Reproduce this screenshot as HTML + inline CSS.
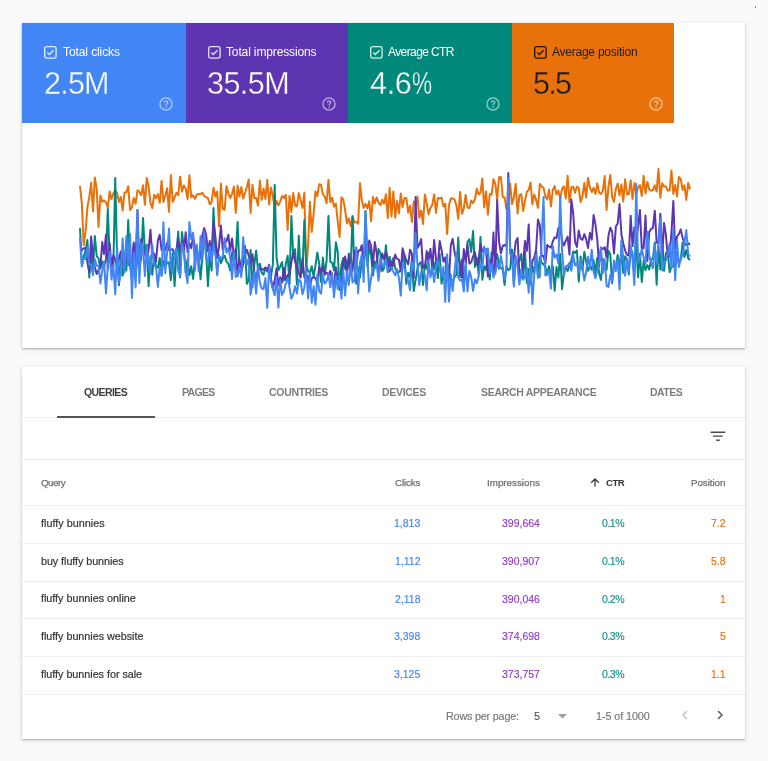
<!DOCTYPE html>
<html><head><meta charset="utf-8">
<style>
html,body{margin:0;padding:0;}
body{width:768px;height:761px;overflow:hidden;background:#fafafa;position:relative;font-family:"Liberation Sans", sans-serif;}
.card{position:absolute;background:#fff;border-radius:0;box-shadow:0 1px 1.5px rgba(0,0,0,.26),0 1px 5px rgba(0,0,0,.12);}
.t{position:absolute;white-space:nowrap;line-height:1;will-change:transform;}
</style></head><body>
<div style="position:absolute;left:755px;top:6px;width:1px;height:2px;background:#8a8a8a"></div>
<div class="card" style="left:22px;top:23px;width:723px;height:325px;"></div>
<div class="card" style="left:22px;top:367px;width:723px;height:372px;"></div>
<div style="position:absolute;left:22.00px;top:23px;width:164.00px;height:99.6px;background:#4285f4"></div>
<svg style="position:absolute;left:44.00px;top:46.2px" width="13" height="13" viewBox="0 0 13 13"><rect x="0.7" y="0.7" width="11.4" height="11.4" rx="2" fill="none" stroke="rgba(255,255,255,.85)" stroke-width="1.3"/><path d="M3.3 6.5 L5.3 8.5 L9.6 4.2" fill="none" stroke="rgba(255,255,255,.85)" stroke-width="1.25"/></svg>
<div class="t" style="left:62.9px;top:45.60px;font-size:12px;color:#fff;font-weight:400;letter-spacing:-0.091px;">Total clicks</div>
<div class="t" style="left:44.3px;top:67.98px;font-size:30.5px;color:#fff;font-weight:400;letter-spacing:-0.767px;-webkit-text-stroke:0.35px #4285f4;">2.5M</div>
<svg style="position:absolute;left:159.40px;top:96.60px" width="14" height="14" viewBox="0 0 14 14"><circle cx="7" cy="7" r="6.1" fill="none" stroke="rgba(255,255,255,.6)" stroke-width="1.25"/><path d="M5.2 5.4 C5.2 3.6 8.8 3.6 8.8 5.3 C8.8 6.6 7.1 6.7 7.1 8.3" fill="none" stroke="rgba(255,255,255,.6)" stroke-width="1.2"/><circle cx="7.1" cy="10" r="0.8" fill="rgba(255,255,255,.6)"/></svg>
<div style="position:absolute;left:185.60px;top:23px;width:163.00px;height:99.6px;background:#5e35b1"></div>
<svg style="position:absolute;left:207.60px;top:46.2px" width="13" height="13" viewBox="0 0 13 13"><rect x="0.7" y="0.7" width="11.4" height="11.4" rx="2" fill="none" stroke="rgba(255,255,255,.85)" stroke-width="1.3"/><path d="M3.3 6.5 L5.3 8.5 L9.6 4.2" fill="none" stroke="rgba(255,255,255,.85)" stroke-width="1.25"/></svg>
<div class="t" style="left:226.0px;top:45.60px;font-size:12px;color:#fff;font-weight:400;letter-spacing:-0.138px;">Total impressions</div>
<div class="t" style="left:206.8px;top:67.98px;font-size:30.5px;color:#fff;font-weight:400;letter-spacing:-0.55px;-webkit-text-stroke:0.35px #5e35b1;">35.5M</div>
<svg style="position:absolute;left:322.45px;top:96.60px" width="14" height="14" viewBox="0 0 14 14"><circle cx="7" cy="7" r="6.1" fill="none" stroke="rgba(255,255,255,.6)" stroke-width="1.25"/><path d="M5.2 5.4 C5.2 3.6 8.8 3.6 8.8 5.3 C8.8 6.6 7.1 6.7 7.1 8.3" fill="none" stroke="rgba(255,255,255,.6)" stroke-width="1.2"/><circle cx="7.1" cy="10" r="0.8" fill="rgba(255,255,255,.6)"/></svg>
<div style="position:absolute;left:348.20px;top:23px;width:163.95px;height:99.6px;background:#00897b"></div>
<svg style="position:absolute;left:370.20px;top:46.2px" width="13" height="13" viewBox="0 0 13 13"><rect x="0.7" y="0.7" width="11.4" height="11.4" rx="2" fill="none" stroke="rgba(255,255,255,.85)" stroke-width="1.3"/><path d="M3.3 6.5 L5.3 8.5 L9.6 4.2" fill="none" stroke="rgba(255,255,255,.85)" stroke-width="1.25"/></svg>
<div class="t" style="left:388.1px;top:45.60px;font-size:12px;color:#fff;font-weight:400;letter-spacing:-0.6px;">Average CTR</div>
<div class="t" style="left:369.6px;top:67.98px;font-size:30.5px;color:#fff;font-weight:400;letter-spacing:-0.3px;-webkit-text-stroke:0.35px #00897b;">4.6<span style="display:inline-block;transform:scaleX(0.74);transform-origin:0 0">%</span></div>
<svg style="position:absolute;left:485.50px;top:96.60px" width="14" height="14" viewBox="0 0 14 14"><circle cx="7" cy="7" r="6.1" fill="none" stroke="rgba(255,255,255,.6)" stroke-width="1.25"/><path d="M5.2 5.4 C5.2 3.6 8.8 3.6 8.8 5.3 C8.8 6.6 7.1 6.7 7.1 8.3" fill="none" stroke="rgba(255,255,255,.6)" stroke-width="1.2"/><circle cx="7.1" cy="10" r="0.8" fill="rgba(255,255,255,.6)"/></svg>
<div style="position:absolute;left:511.75px;top:23px;width:162.70px;height:99.6px;background:#e8710a"></div>
<svg style="position:absolute;left:533.75px;top:46.2px" width="13" height="13" viewBox="0 0 13 13"><rect x="0.7" y="0.7" width="11.4" height="11.4" rx="2" fill="none" stroke="rgba(0,0,0,.85)" stroke-width="1.3"/><path d="M3.3 6.5 L5.3 8.5 L9.6 4.2" fill="none" stroke="rgba(0,0,0,.85)" stroke-width="1.25"/></svg>
<div class="t" style="left:551.5px;top:45.60px;font-size:12px;color:#1d1d1d;font-weight:400;letter-spacing:-0.24px;">Average position</div>
<div class="t" style="left:532.5px;top:67.98px;font-size:30.5px;color:#1d1d1d;font-weight:400;letter-spacing:-1.75px;-webkit-text-stroke:0.35px #e8710a;">5.5</div>
<svg style="position:absolute;left:648.55px;top:96.60px" width="14" height="14" viewBox="0 0 14 14"><circle cx="7" cy="7" r="6.1" fill="none" stroke="rgba(255,255,255,.6)" stroke-width="1.25"/><path d="M5.2 5.4 C5.2 3.6 8.8 3.6 8.8 5.3 C8.8 6.6 7.1 6.7 7.1 8.3" fill="none" stroke="rgba(255,255,255,.6)" stroke-width="1.2"/><circle cx="7.1" cy="10" r="0.8" fill="rgba(255,255,255,.6)"/></svg>
<svg style="position:absolute;left:0;top:0" width="768" height="761" viewBox="0 0 768 761"><polyline points="80.00,186.0 81.85,203.6 83.71,245.0 85.56,231.4 87.42,207.1 89.27,197.1 91.12,182.7 92.98,211.4 94.83,177.5 96.69,188.8 98.54,227.0 100.40,195.4 102.25,201.8 104.10,200.4 105.96,202.4 107.81,207.7 109.67,191.4 111.52,199.3 113.37,193.3 115.23,190.7 117.08,193.0 118.94,202.0 120.79,197.0 122.64,210.6 124.50,192.6 126.35,192.2 128.21,186.3 130.06,209.9 131.91,207.3 133.77,198.1 135.62,203.7 137.48,190.3 139.33,191.6 141.19,195.2 143.04,185.3 144.89,204.7 146.75,177.9 148.60,186.3 150.46,203.1 152.31,208.2 154.16,194.8 156.02,198.2 157.87,194.1 159.73,202.8 161.58,180.9 163.43,201.9 165.29,195.7 167.14,188.3 169.00,211.8 170.85,175.1 172.71,201.8 174.56,197.4 176.41,192.8 178.27,195.2 180.12,176.7 181.98,191.6 183.83,185.5 185.68,188.5 187.54,199.2 189.39,175.3 191.25,197.4 193.10,195.2 194.95,198.9 196.81,194.7 198.66,193.9 200.52,194.1 202.37,192.7 204.22,195.9 206.08,197.2 207.93,198.1 209.79,204.3 211.64,201.8 213.50,187.7 215.35,196.6 217.20,191.6 219.06,226.2 220.91,183.5 222.77,209.1 224.62,209.7 226.47,186.2 228.33,193.3 230.18,198.0 232.04,194.0 233.89,186.6 235.74,212.9 237.60,185.8 239.45,196.5 241.31,187.1 243.16,198.4 245.02,192.8 246.87,187.0 248.72,179.6 250.58,212.9 252.43,184.8 254.29,198.0 256.14,198.1 257.99,205.6 259.85,180.5 261.70,199.8 263.56,188.6 265.41,199.0 267.26,179.8 269.12,204.5 270.97,187.6 272.83,195.9 274.68,207.8 276.53,200.9 278.39,205.3 280.24,201.3 282.10,196.0 283.95,198.0 285.81,194.8 287.66,230.0 289.51,195.9 291.37,211.9 293.22,193.1 295.08,205.5 296.93,206.4 298.78,192.9 300.64,199.9 302.49,208.0 304.35,192.4 306.20,271.0 308.05,246.5 309.91,201.8 311.76,232.0 313.62,213.8 315.47,191.3 317.33,196.2 319.18,184.2 321.03,184.7 322.89,194.4 324.74,196.6 326.60,203.3 328.45,179.8 330.30,202.0 332.16,197.7 334.01,206.8 335.87,203.5 337.72,221.4 339.57,237.0 341.43,197.2 343.28,199.3 345.14,210.1 346.99,223.4 348.84,218.4 350.70,226.2 352.55,216.5 354.41,222.4 356.26,222.1 358.12,223.8 359.97,183.2 361.82,200.2 363.68,207.9 365.53,203.9 367.39,208.5 369.24,201.3 371.09,221.2 372.95,197.1 374.80,203.5 376.66,197.4 378.51,202.6 380.36,205.2 382.22,199.6 384.07,203.6 385.93,194.2 387.78,218.0 389.64,187.8 391.49,216.5 393.34,191.5 395.20,217.7 397.05,201.1 398.91,213.4 400.76,193.6 402.61,207.0 404.47,197.9 406.32,197.9 408.18,212.7 410.03,205.6 411.88,222.0 413.74,201.5 415.59,204.8 417.45,196.6 419.30,217.7 421.16,210.4 423.01,223.9 424.86,194.5 426.72,203.4 428.57,214.3 430.43,208.0 432.28,204.8 434.13,194.4 435.99,213.0 437.84,198.0 439.70,198.5 441.55,197.6 443.40,206.6 445.26,203.6 447.11,234.0 448.97,205.2 450.82,198.6 452.67,198.2 454.53,199.6 456.38,205.2 458.24,218.9 460.09,191.9 461.95,213.8 463.80,208.6 465.65,195.0 467.51,207.3 469.36,208.1 471.22,200.6 473.07,203.2 474.92,199.2 476.78,188.8 478.63,194.5 480.49,192.8 482.34,178.4 484.19,207.4 486.05,191.4 487.90,214.6 489.76,194.1 491.61,194.7 493.47,179.2 495.32,183.8 497.17,199.4 499.03,177.3 500.88,177.0 502.74,197.2 504.59,197.4 506.44,209.1 508.30,201.8 510.15,183.5 512.01,204.1 513.86,197.4 515.71,183.7 517.57,213.6 519.42,195.3 521.28,194.0 523.13,211.0 524.98,200.7 526.84,191.8 528.69,190.1 530.55,182.5 532.40,204.4 534.26,194.5 536.11,199.9 537.96,207.9 539.82,183.9 541.67,186.4 543.53,187.7 545.38,196.6 547.23,199.4 549.09,189.6 550.94,206.4 552.80,190.0 554.65,186.1 556.50,194.6 558.36,190.5 560.21,198.3 562.07,188.7 563.92,186.4 565.78,198.5 567.63,175.7 569.48,202.3 571.34,187.3 573.19,186.7 575.05,192.8 576.90,186.6 578.75,188.1 580.61,202.0 582.46,196.3 584.32,183.1 586.17,197.6 588.02,177.9 589.88,187.3 591.73,192.0 593.59,187.8 595.44,193.9 597.29,183.4 599.15,192.6 601.00,194.0 602.86,190.4 604.71,176.1 606.57,210.0 608.42,186.9 610.27,174.9 612.13,196.9 613.98,201.8 615.84,189.0 617.69,183.7 619.54,195.4 621.40,184.6 623.25,201.5 625.11,179.3 626.96,194.2 628.81,194.0 630.67,180.3 632.52,199.0 634.38,183.0 636.23,194.2 638.09,187.6 639.94,185.1 641.79,196.0 643.65,175.8 645.50,193.5 647.36,181.8 649.21,189.5 651.06,190.7 652.92,190.3 654.77,185.4 656.63,191.6 658.48,168.8 660.33,197.8 662.19,183.2 664.04,186.6 665.90,186.4 667.75,190.7 669.60,190.3 671.46,170.5 673.31,193.9 675.17,185.1 677.02,196.5 678.88,177.0 680.73,178.9 682.58,189.9 684.44,185.3 686.29,200.0 688.15,183.0 690.00,189.6" fill="none" stroke="#e8710a" stroke-width="2" stroke-linejoin="round"/><polyline points="80.00,228.0 81.85,264.5 83.71,256.9 85.56,250.4 87.42,240.0 89.27,277.4 91.12,250.5 92.98,268.5 94.83,236.1 96.69,256.1 98.54,258.5 100.40,268.4 102.25,261.5 104.10,266.2 105.96,259.1 107.81,209.0 109.67,257.7 111.52,264.6 113.37,265.6 115.23,178.0 117.08,258.6 118.94,285.1 120.79,257.0 122.64,275.6 124.50,264.8 126.35,270.6 128.21,220.0 130.06,265.8 131.91,279.2 133.77,244.6 135.62,277.8 137.48,254.0 139.33,266.1 141.19,259.3 143.04,218.0 144.89,252.2 146.75,244.8 148.60,286.1 150.46,256.1 152.31,274.7 154.16,255.9 156.02,266.8 157.87,267.6 159.73,258.1 161.58,275.1 163.43,260.8 165.29,266.4 167.14,262.5 169.00,262.4 170.85,280.3 172.71,253.3 174.56,286.1 176.41,252.7 178.27,231.5 180.12,277.5 181.98,232.1 183.83,246.7 185.68,272.7 187.54,259.5 189.39,275.1 191.25,266.3 193.10,278.8 194.95,259.5 196.81,250.3 198.66,255.8 200.52,279.2 202.37,257.5 204.22,233.9 206.08,251.8 207.93,286.1 209.79,254.0 211.64,270.4 213.50,208.0 215.35,254.0 217.20,254.9 219.06,255.2 220.91,263.0 222.77,258.5 224.62,255.5 226.47,261.6 228.33,263.6 230.18,270.5 232.04,252.3 233.89,262.4 235.74,255.7 237.60,222.0 239.45,269.3 241.31,264.7 243.16,258.7 245.02,245.7 246.87,283.8 248.72,280.0 250.58,249.9 252.43,287.3 254.29,265.0 256.14,250.5 257.99,269.8 259.85,263.7 261.70,272.7 263.56,274.7 265.41,267.9 267.26,271.5 269.12,272.4 270.97,276.5 272.83,264.4 274.68,185.0 276.53,256.9 278.39,270.3 280.24,266.5 282.10,262.0 283.95,280.3 285.81,263.8 287.66,255.7 289.51,284.1 291.37,216.0 293.22,255.5 295.08,249.3 296.93,284.8 298.78,235.7 300.64,274.7 302.49,271.2 304.35,220.0 306.20,265.2 308.05,270.9 309.91,273.0 311.76,266.2 313.62,276.7 315.47,265.6 317.33,252.5 319.18,263.6 321.03,282.2 322.89,257.5 324.74,274.9 326.60,260.9 328.45,216.0 330.30,262.0 332.16,262.6 334.01,270.5 335.87,242.2 337.72,251.7 339.57,290.1 341.43,265.1 343.28,258.0 345.14,268.9 346.99,260.5 348.84,267.1 350.70,267.7 352.55,216.0 354.41,269.6 356.26,283.8 358.12,267.2 359.97,277.8 361.82,260.5 363.68,271.8 365.53,211.0 367.39,266.5 369.24,246.5 371.09,254.9 372.95,275.5 374.80,261.6 376.66,265.8 378.51,248.9 380.36,252.9 382.22,271.2 384.07,268.5 385.93,245.2 387.78,272.1 389.64,256.7 391.49,269.4 393.34,257.8 395.20,268.3 397.05,271.2 398.91,272.2 400.76,270.0 402.61,261.5 404.47,255.0 406.32,283.9 408.18,272.8 410.03,277.4 411.88,258.9 413.74,291.0 415.59,280.1 417.45,268.6 419.30,263.5 421.16,262.1 423.01,285.0 424.86,264.6 426.72,268.9 428.57,253.1 430.43,257.2 432.28,257.0 434.13,269.0 435.99,260.1 437.84,278.1 439.70,254.1 441.55,283.8 443.40,272.1 445.26,274.7 447.11,263.0 448.97,269.1 450.82,284.9 452.67,281.3 454.53,277.1 456.38,275.1 458.24,237.6 460.09,277.0 461.95,259.6 463.80,284.5 465.65,264.2 467.51,242.0 469.36,239.3 471.22,252.0 473.07,231.0 474.92,267.1 476.78,257.4 478.63,274.0 480.49,237.0 482.34,279.7 484.19,266.3 486.05,270.1 487.90,253.4 489.76,279.5 491.61,252.6 493.47,273.7 495.32,262.0 497.17,254.1 499.03,265.2 500.88,268.0 502.74,269.3 504.59,285.0 506.44,266.1 508.30,270.1 510.15,269.0 512.01,249.7 513.86,283.8 515.71,258.9 517.57,263.1 519.42,260.8 521.28,253.9 523.13,279.4 524.98,251.4 526.84,282.9 528.69,268.9 530.55,284.4 532.40,266.5 534.26,273.1 536.11,250.1 537.96,276.2 539.82,257.2 541.67,262.6 543.53,264.3 545.38,266.7 547.23,274.1 549.09,266.2 550.94,276.0 552.80,266.2 554.65,290.8 556.50,267.0 558.36,277.5 560.21,254.0 562.07,289.2 563.92,272.5 565.78,266.3 567.63,271.1 569.48,266.2 571.34,260.2 573.19,251.6 575.05,252.9 576.90,250.2 578.75,281.6 580.61,256.5 582.46,270.4 584.32,251.7 586.17,261.4 588.02,270.8 589.88,266.2 591.73,269.7 593.59,260.1 595.44,273.5 597.29,257.7 599.15,273.5 601.00,279.9 602.86,259.1 604.71,265.7 606.57,269.8 608.42,250.7 610.27,254.2 612.13,283.2 613.98,266.5 615.84,266.3 617.69,255.0 619.54,268.8 621.40,251.5 623.25,272.8 625.11,256.3 626.96,260.1 628.81,274.5 630.67,248.2 632.52,253.5 634.38,274.6 636.23,240.9 638.09,277.3 639.94,253.7 641.79,282.0 643.65,260.9 645.50,270.2 647.36,265.1 649.21,269.5 651.06,259.3 652.92,258.5 654.77,242.6 656.63,284.8 658.48,246.0 660.33,269.4 662.19,240.0 664.04,270.8 665.90,253.0 667.75,251.8 669.60,272.1 671.46,266.8 673.31,266.6 675.17,251.3 677.02,255.8 678.88,264.0 680.73,259.8 682.58,242.8 684.44,257.1 686.29,250.1 688.15,258.0 690.00,260.1" fill="none" stroke="#00897b" stroke-width="2" stroke-linejoin="round"/><polyline points="80.00,251.3 81.85,250.4 83.71,248.2 85.56,248.3 87.42,262.5 89.27,272.0 91.12,236.5 92.98,256.7 94.83,266.9 96.69,274.0 98.54,270.0 100.40,266.5 102.25,242.1 104.10,254.0 105.96,234.5 107.81,268.6 109.67,243.3 111.52,266.8 113.37,255.3 115.23,259.3 117.08,268.1 118.94,258.6 120.79,251.5 122.64,262.8 124.50,269.5 126.35,252.7 128.21,250.1 130.06,260.4 131.91,262.3 133.77,242.4 135.62,259.1 137.48,210.0 139.33,266.8 141.19,238.9 143.04,249.0 144.89,253.7 146.75,260.9 148.60,249.5 150.46,229.8 152.31,256.9 154.16,253.6 156.02,261.6 157.87,240.3 159.73,234.9 161.58,250.1 163.43,245.9 165.29,250.2 167.14,242.8 169.00,250.3 170.85,249.4 172.71,249.2 174.56,254.7 176.41,251.6 178.27,238.6 180.12,250.1 181.98,242.4 183.83,252.1 185.68,232.2 187.54,251.9 189.39,242.9 191.25,248.1 193.10,236.5 194.95,247.4 196.81,258.0 198.66,262.9 200.52,255.7 202.37,235.3 204.22,228.1 206.08,234.5 207.93,251.2 209.79,241.1 211.64,257.7 213.50,221.8 215.35,235.9 217.20,258.1 219.06,246.2 220.91,225.6 222.77,249.9 224.62,242.2 226.47,241.5 228.33,234.7 230.18,250.8 232.04,238.6 233.89,256.0 235.74,249.5 237.60,275.6 239.45,259.5 241.31,271.9 243.16,264.1 245.02,253.5 246.87,249.9 248.72,255.8 250.58,263.2 252.43,254.3 254.29,272.0 256.14,277.6 257.99,269.1 259.85,269.7 261.70,268.8 263.56,269.8 265.41,267.5 267.26,269.9 269.12,264.7 270.97,278.6 272.83,288.6 274.68,280.6 276.53,268.3 278.39,285.3 280.24,277.2 282.10,282.5 283.95,268.1 285.81,279.9 287.66,275.0 289.51,275.5 291.37,262.4 293.22,252.6 295.08,261.8 296.93,265.9 298.78,272.5 300.64,277.6 302.49,258.5 304.35,277.3 306.20,279.2 308.05,275.8 309.91,287.1 311.76,278.4 313.62,277.1 315.47,278.2 317.33,283.0 319.18,267.1 321.03,272.3 322.89,266.8 324.74,273.9 326.60,272.7 328.45,275.0 330.30,270.9 332.16,280.7 334.01,287.0 335.87,267.2 337.72,279.4 339.57,281.5 341.43,282.3 343.28,261.9 345.14,256.5 346.99,275.5 348.84,253.6 350.70,275.5 352.55,268.1 354.41,250.7 356.26,267.5 358.12,250.6 359.97,250.8 361.82,245.1 363.68,266.0 365.53,246.6 367.39,249.5 369.24,240.5 371.09,245.8 372.95,265.0 374.80,242.1 376.66,252.8 378.51,276.0 380.36,267.1 382.22,253.6 384.07,259.1 385.93,251.4 387.78,258.4 389.64,271.3 391.49,261.2 393.34,265.6 395.20,254.6 397.05,258.8 398.91,259.6 400.76,271.3 402.61,248.3 404.47,255.7 406.32,260.2 408.18,264.4 410.03,249.7 411.88,253.6 413.74,277.9 415.59,197.0 417.45,247.9 419.30,244.6 421.16,239.1 423.01,267.8 424.86,267.3 426.72,251.1 428.57,260.0 430.43,248.7 432.28,268.6 434.13,240.0 435.99,259.0 437.84,265.0 439.70,240.9 441.55,250.2 443.40,261.4 445.26,257.5 447.11,277.5 448.97,278.4 450.82,245.5 452.67,238.8 454.53,251.8 456.38,260.6 458.24,260.2 460.09,262.4 461.95,277.6 463.80,249.1 465.65,262.2 467.51,244.8 469.36,263.6 471.22,262.2 473.07,256.4 474.92,252.1 476.78,264.8 478.63,261.3 480.49,244.0 482.34,251.2 484.19,250.1 486.05,249.0 487.90,276.6 489.76,260.1 491.61,269.9 493.47,232.6 495.32,273.4 497.17,200.0 499.03,241.4 500.88,253.3 502.74,246.0 504.59,245.0 506.44,246.4 508.30,173.0 510.15,247.6 512.01,263.5 513.86,258.1 515.71,241.4 517.57,238.0 519.42,274.7 521.28,277.8 523.13,262.9 524.98,241.1 526.84,251.0 528.69,224.5 530.55,273.6 532.40,261.4 534.26,257.5 536.11,249.4 537.96,219.6 539.82,225.1 541.67,255.7 543.53,256.1 545.38,263.5 547.23,245.1 549.09,246.5 550.94,247.7 552.80,241.5 554.65,237.4 556.50,238.1 558.36,228.2 560.21,226.2 562.07,240.9 563.92,245.5 565.78,240.6 567.63,236.6 569.48,254.6 571.34,199.5 573.19,213.5 575.05,241.9 576.90,247.0 578.75,230.6 580.61,238.7 582.46,239.8 584.32,234.1 586.17,239.4 588.02,248.1 589.88,232.8 591.73,239.8 593.59,215.0 595.44,224.6 597.29,239.4 599.15,266.2 601.00,247.4 602.86,249.0 604.71,247.2 606.57,257.5 608.42,235.9 610.27,227.7 612.13,231.8 613.98,253.5 615.84,226.6 617.69,223.6 619.54,204.0 621.40,234.3 623.25,243.5 625.11,250.6 626.96,254.6 628.81,255.6 630.67,215.7 632.52,246.1 634.38,227.3 636.23,240.5 638.09,226.9 639.94,210.0 641.79,248.7 643.65,248.3 645.50,215.6 647.36,260.9 649.21,232.1 651.06,229.0 652.92,228.0 654.77,210.7 656.63,242.6 658.48,243.5 660.33,213.7 662.19,255.3 664.04,222.9 665.90,235.2 667.75,256.9 669.60,255.9 671.46,232.7 673.31,201.0 675.17,248.8 677.02,236.5 678.88,234.1 680.73,229.4 682.58,237.7 684.44,243.2 686.29,245.1 688.15,243.0 690.00,244.7" fill="none" stroke="#5e35b1" stroke-width="2" stroke-linejoin="round"/><polyline points="80.00,237.5 81.85,266.4 83.71,258.6 85.56,259.0 87.42,247.2 89.27,264.9 91.12,265.3 92.98,275.2 94.83,259.2 96.69,265.5 98.54,265.8 100.40,283.4 102.25,270.6 104.10,261.6 105.96,293.4 107.81,266.9 109.67,251.5 111.52,279.6 113.37,265.2 115.23,294.3 117.08,246.8 118.94,282.6 120.79,274.4 122.64,238.4 124.50,272.4 126.35,236.2 128.21,265.6 130.06,233.9 131.91,297.9 133.77,252.3 135.62,287.4 137.48,210.0 139.33,282.9 141.19,242.9 143.04,248.4 144.89,275.9 146.75,246.0 148.60,265.3 150.46,273.6 152.31,244.6 154.16,265.0 156.02,267.4 157.87,286.9 159.73,267.1 161.58,276.0 163.43,222.3 165.29,273.3 167.14,251.4 169.00,228.5 170.85,268.9 172.71,273.4 174.56,252.4 176.41,248.4 178.27,270.9 180.12,276.1 181.98,244.0 183.83,251.6 185.68,271.7 187.54,283.2 189.39,222.3 191.25,239.1 193.10,232.8 194.95,270.8 196.81,244.6 198.66,271.5 200.52,236.3 202.37,254.7 204.22,231.7 206.08,259.0 207.93,262.1 209.79,246.3 211.64,261.8 213.50,244.8 215.35,253.6 217.20,275.3 219.06,256.2 220.91,258.1 222.77,256.7 224.62,238.2 226.47,252.7 228.33,248.0 230.18,257.4 232.04,279.0 233.89,252.0 235.74,276.9 237.60,276.4 239.45,266.6 241.31,277.0 243.16,237.3 245.02,262.2 246.87,264.4 248.72,258.2 250.58,294.7 252.43,283.2 254.29,271.5 256.14,293.6 257.99,266.0 259.85,282.5 261.70,288.5 263.56,289.1 265.41,278.1 267.26,307.8 269.12,265.8 270.97,281.7 272.83,288.9 274.68,295.2 276.53,276.7 278.39,307.6 280.24,279.4 282.10,294.9 283.95,291.3 285.81,283.5 287.66,278.5 289.51,287.3 291.37,298.6 293.22,294.4 295.08,286.3 296.93,293.5 298.78,279.4 300.64,281.3 302.49,294.2 304.35,287.5 306.20,269.0 308.05,298.4 309.91,272.8 311.76,302.7 313.62,286.2 315.47,304.7 317.33,274.6 319.18,291.1 321.03,293.7 322.89,275.1 324.74,283.6 326.60,281.3 328.45,274.3 330.30,287.2 332.16,273.1 334.01,297.1 335.87,276.3 337.72,289.0 339.57,275.8 341.43,298.6 343.28,270.8 345.14,295.6 346.99,271.1 348.84,284.9 350.70,264.6 352.55,282.4 354.41,280.9 356.26,247.2 358.12,293.3 359.97,262.5 361.82,254.7 363.68,282.0 365.53,211.0 367.39,258.1 369.24,291.6 371.09,277.6 372.95,268.0 374.80,268.9 376.66,263.8 378.51,280.7 380.36,258.6 382.22,265.4 384.07,267.0 385.93,259.2 387.78,270.8 389.64,267.5 391.49,267.4 393.34,271.7 395.20,275.4 397.05,269.3 398.91,278.1 400.76,295.6 402.61,263.1 404.47,267.7 406.32,276.5 408.18,279.7 410.03,290.3 411.88,261.7 413.74,270.4 415.59,233.0 417.45,264.7 419.30,285.0 421.16,271.8 423.01,272.5 424.86,274.8 426.72,290.3 428.57,260.7 430.43,277.5 432.28,267.2 434.13,282.0 435.99,267.7 437.84,260.1 439.70,267.1 441.55,276.5 443.40,266.7 445.26,302.0 447.11,254.3 448.97,301.6 450.82,274.5 452.67,291.0 454.53,271.7 456.38,253.3 458.24,277.3 460.09,280.6 461.95,279.2 463.80,291.4 465.65,263.1 467.51,291.4 469.36,270.9 471.22,277.2 473.07,290.9 474.92,279.2 476.78,283.3 478.63,276.3 480.49,264.3 482.34,268.8 484.19,246.4 486.05,253.5 487.90,248.4 489.76,273.3 491.61,263.7 493.47,277.5 495.32,271.7 497.17,263.0 499.03,269.0 500.88,255.8 502.74,266.7 504.59,279.6 506.44,268.5 508.30,178.0 510.15,254.0 512.01,255.1 513.86,286.6 515.71,256.0 517.57,266.6 519.42,284.6 521.28,269.2 523.13,279.4 524.98,277.3 526.84,267.8 528.69,292.8 530.55,259.3 532.40,304.0 534.26,274.8 536.11,254.6 537.96,277.8 539.82,277.1 541.67,239.1 543.53,197.0 545.38,275.5 547.23,274.8 549.09,270.9 550.94,288.4 552.80,246.0 554.65,257.6 556.50,254.6 558.36,263.5 560.21,196.0 562.07,250.6 563.92,275.6 565.78,266.9 567.63,265.6 569.48,262.8 571.34,270.8 573.19,254.3 575.05,265.4 576.90,263.0 578.75,272.8 580.61,259.3 582.46,268.2 584.32,280.4 586.17,271.8 588.02,256.9 589.88,267.8 591.73,249.7 593.59,272.0 595.44,278.2 597.29,269.7 599.15,261.5 601.00,247.7 602.86,273.0 604.71,259.2 606.57,285.8 608.42,286.9 610.27,275.1 612.13,281.6 613.98,260.5 615.84,271.1 617.69,259.4 619.54,289.4 621.40,240.0 623.25,258.2 625.11,275.7 626.96,258.3 628.81,271.8 630.67,245.6 632.52,259.5 634.38,285.0 636.23,184.0 638.09,262.3 639.94,257.9 641.79,249.2 643.65,257.9 645.50,263.6 647.36,231.8 649.21,255.4 651.06,262.2 652.92,268.5 654.77,245.5 656.63,263.8 658.48,243.5 660.33,218.4 662.19,270.4 664.04,262.3 665.90,260.6 667.75,254.8 669.60,243.2 671.46,268.1 673.31,229.1 675.17,280.1 677.02,241.2 678.88,267.1 680.73,257.6 682.58,255.3 684.44,242.4 686.29,230.1 688.15,254.0 690.00,256.5" fill="none" stroke="#4285f4" stroke-width="2" stroke-linejoin="round"/></svg>

<div class="t" style="left:83.6px;top:386.88px;font-size:10.5px;color:#3c4043;font-weight:700;letter-spacing:-0.6px;">QUERIES</div>
<div class="t" style="left:181.5px;top:386.88px;font-size:10.5px;color:#7d7d7d;font-weight:700;letter-spacing:-0.675px;">PAGES</div>
<div class="t" style="left:268.9px;top:386.88px;font-size:10.5px;color:#7d7d7d;font-weight:700;letter-spacing:-0.312px;">COUNTRIES</div>
<div class="t" style="left:382.3px;top:386.88px;font-size:10.5px;color:#7d7d7d;font-weight:700;letter-spacing:-0.317px;">DEVICES</div>
<div class="t" style="left:480.5px;top:386.88px;font-size:10.5px;color:#7d7d7d;font-weight:700;letter-spacing:-0.294px;">SEARCH APPEARANCE</div>
<div class="t" style="left:650.3px;top:386.88px;font-size:10.5px;color:#7d7d7d;font-weight:700;letter-spacing:-0.525px;">DATES</div>
<div style="position:absolute;left:22px;top:417px;width:723px;height:1px;background:#efefef"></div>
<div style="position:absolute;left:56.5px;top:416px;width:98.2px;height:2px;background:#545454"></div>
<svg style="position:absolute;left:700px;top:420px" width="40" height="30" viewBox="700 420 40 30"><path d="M710.7 432.2 H725.2 M713 436.1 H722.8 M716.2 440.2 H719.7" stroke="#4a4a4a" stroke-width="1.4" fill="none"/></svg>
<div style="position:absolute;left:22px;top:459px;width:723px;height:1px;background:#efefef"></div>
<div class="t" style="left:40.9px;top:477.77px;font-size:9.8px;color:#6f6f6f;font-weight:400;letter-spacing:-0.5px;-webkit-text-stroke:0.25px #6f6f6f;">Query</div>
<div class="t" style="right:347.5px;top:477.77px;font-size:9.8px;color:#6f6f6f;font-weight:400;letter-spacing:-0.14px;-webkit-text-stroke:0.25px #6f6f6f;">Clicks</div>
<div class="t" style="right:228.20000000000005px;top:477.77px;font-size:9.8px;color:#6f6f6f;font-weight:400;letter-spacing:0.0px;-webkit-text-stroke:0.25px #6f6f6f;">Impressions</div>
<div class="t" style="right:143.60000000000002px;top:477.94px;font-size:9.6px;color:#333;font-weight:700;letter-spacing:-0.55px;">CTR</div>
<div class="t" style="right:42.200000000000045px;top:477.77px;font-size:9.8px;color:#6f6f6f;font-weight:400;letter-spacing:-0.057px;-webkit-text-stroke:0.25px #6f6f6f;">Position</div>
<svg style="position:absolute;left:590px;top:478px" width="10" height="9" viewBox="0 0 10 9"><path d="M5 8.6 V1.2 M1.2 4.8 L5 1 L8.8 4.8" fill="none" stroke="#333" stroke-width="1.25"/></svg>
<div style="position:absolute;left:22px;top:505.30px;width:723px;height:1px;background:#efefef"></div>
<div class="t" style="left:41.25px;top:518.02px;font-size:10.8px;color:#333;font-weight:400;letter-spacing:0.015px;-webkit-text-stroke:0.2px #333;">fluffy bunnies</div>
<div class="t" style="right:347.5px;top:518.28px;font-size:10.5px;color:#4285f4;font-weight:400;letter-spacing:0px;-webkit-text-stroke:0.15px #4285f4;">1,813</div>
<div class="t" style="right:228.20000000000005px;top:518.28px;font-size:10.5px;color:#8e3bc6;font-weight:400;letter-spacing:0px;-webkit-text-stroke:0.15px #8e3bc6;">399,664</div>
<div class="t" style="right:143.60000000000002px;top:518.28px;font-size:10.5px;color:#12908a;font-weight:400;letter-spacing:-0.45px;-webkit-text-stroke:0.15px #12908a;">0.1%</div>
<div class="t" style="right:42.200000000000045px;top:518.28px;font-size:10.5px;color:#e8710a;font-weight:400;letter-spacing:0px;-webkit-text-stroke:0.15px #e8710a;">7.2</div>
<div style="position:absolute;left:22px;top:542.96px;width:723px;height:1px;background:#efefef"></div>
<div class="t" style="left:41.25px;top:555.68px;font-size:10.8px;color:#333;font-weight:400;letter-spacing:-0.071px;-webkit-text-stroke:0.2px #333;">buy fluffy bunnies</div>
<div class="t" style="right:347.5px;top:555.94px;font-size:10.5px;color:#4285f4;font-weight:400;letter-spacing:0px;-webkit-text-stroke:0.15px #4285f4;">1,112</div>
<div class="t" style="right:228.20000000000005px;top:555.94px;font-size:10.5px;color:#8e3bc6;font-weight:400;letter-spacing:0px;-webkit-text-stroke:0.15px #8e3bc6;">390,907</div>
<div class="t" style="right:143.60000000000002px;top:555.94px;font-size:10.5px;color:#12908a;font-weight:400;letter-spacing:-0.45px;-webkit-text-stroke:0.15px #12908a;">0.1%</div>
<div class="t" style="right:42.200000000000045px;top:555.94px;font-size:10.5px;color:#e8710a;font-weight:400;letter-spacing:0px;-webkit-text-stroke:0.15px #e8710a;">5.8</div>
<div style="position:absolute;left:22px;top:580.62px;width:723px;height:1px;background:#efefef"></div>
<div class="t" style="left:41.25px;top:593.34px;font-size:10.8px;color:#333;font-weight:400;letter-spacing:-0.025px;-webkit-text-stroke:0.2px #333;">fluffy bunnies online</div>
<div class="t" style="right:347.5px;top:593.60px;font-size:10.5px;color:#4285f4;font-weight:400;letter-spacing:0px;-webkit-text-stroke:0.15px #4285f4;">2,118</div>
<div class="t" style="right:228.20000000000005px;top:593.60px;font-size:10.5px;color:#8e3bc6;font-weight:400;letter-spacing:0px;-webkit-text-stroke:0.15px #8e3bc6;">390,046</div>
<div class="t" style="right:143.60000000000002px;top:593.60px;font-size:10.5px;color:#12908a;font-weight:400;letter-spacing:-0.45px;-webkit-text-stroke:0.15px #12908a;">0.2%</div>
<div class="t" style="right:42.200000000000045px;top:593.60px;font-size:10.5px;color:#e8710a;font-weight:400;letter-spacing:0px;-webkit-text-stroke:0.15px #e8710a;">1</div>
<div style="position:absolute;left:22px;top:618.28px;width:723px;height:1px;background:#efefef"></div>
<div class="t" style="left:41.25px;top:631.00px;font-size:10.8px;color:#333;font-weight:400;letter-spacing:-0.029px;-webkit-text-stroke:0.2px #333;">fluffy bunnies website</div>
<div class="t" style="right:347.5px;top:631.25px;font-size:10.5px;color:#4285f4;font-weight:400;letter-spacing:0px;-webkit-text-stroke:0.15px #4285f4;">3,398</div>
<div class="t" style="right:228.20000000000005px;top:631.25px;font-size:10.5px;color:#8e3bc6;font-weight:400;letter-spacing:0px;-webkit-text-stroke:0.15px #8e3bc6;">374,698</div>
<div class="t" style="right:143.60000000000002px;top:631.25px;font-size:10.5px;color:#12908a;font-weight:400;letter-spacing:-0.45px;-webkit-text-stroke:0.15px #12908a;">0.3%</div>
<div class="t" style="right:42.200000000000045px;top:631.25px;font-size:10.5px;color:#e8710a;font-weight:400;letter-spacing:0px;-webkit-text-stroke:0.15px #e8710a;">5</div>
<div style="position:absolute;left:22px;top:655.94px;width:723px;height:1px;background:#efefef"></div>
<div class="t" style="left:41.25px;top:668.66px;font-size:10.8px;color:#333;font-weight:400;letter-spacing:-0.032px;-webkit-text-stroke:0.2px #333;">fluffy bunnies for sale</div>
<div class="t" style="right:347.5px;top:668.92px;font-size:10.5px;color:#4285f4;font-weight:400;letter-spacing:0px;-webkit-text-stroke:0.15px #4285f4;">3,125</div>
<div class="t" style="right:228.20000000000005px;top:668.92px;font-size:10.5px;color:#8e3bc6;font-weight:400;letter-spacing:0px;-webkit-text-stroke:0.15px #8e3bc6;">373,757</div>
<div class="t" style="right:143.60000000000002px;top:668.92px;font-size:10.5px;color:#12908a;font-weight:400;letter-spacing:-0.45px;-webkit-text-stroke:0.15px #12908a;">0.3%</div>
<div class="t" style="right:42.200000000000045px;top:668.92px;font-size:10.5px;color:#e8710a;font-weight:400;letter-spacing:0px;-webkit-text-stroke:0.15px #e8710a;">1.1</div>
<div style="position:absolute;left:22px;top:693.60px;width:723px;height:1px;background:#efefef"></div>
<div class="t" style="left:445.6px;top:710.82px;font-size:10.8px;color:#757575;font-weight:400;letter-spacing:-0.2px;-webkit-text-stroke:0.15px #757575;">Rows per page:</div>
<div class="t" style="left:534px;top:710.82px;font-size:10.8px;color:#3c4043;font-weight:400;letter-spacing:0px;">5</div>
<svg style="position:absolute;left:558px;top:713.5px" width="9" height="5" viewBox="0 0 9 5"><path d="M0 0 H9 L4.5 4.5 Z" fill="#9e9e9e"/></svg>
<div class="t" style="left:596.3px;top:710.82px;font-size:10.8px;color:#757575;font-weight:400;letter-spacing:-0.09px;-webkit-text-stroke:0.15px #757575;">1-5 of 1000</div>
<svg style="position:absolute;left:680px;top:710px" width="10" height="10" viewBox="0 0 10 10"><path d="M7 1 L3 5 L7 9" fill="none" stroke="#c4c4c4" stroke-width="1.6"/></svg>
<svg style="position:absolute;left:715px;top:710px" width="10" height="10" viewBox="0 0 10 10"><path d="M3 1 L7 5 L3 9" fill="none" stroke="#5f6368" stroke-width="1.6"/></svg>

</body></html>
